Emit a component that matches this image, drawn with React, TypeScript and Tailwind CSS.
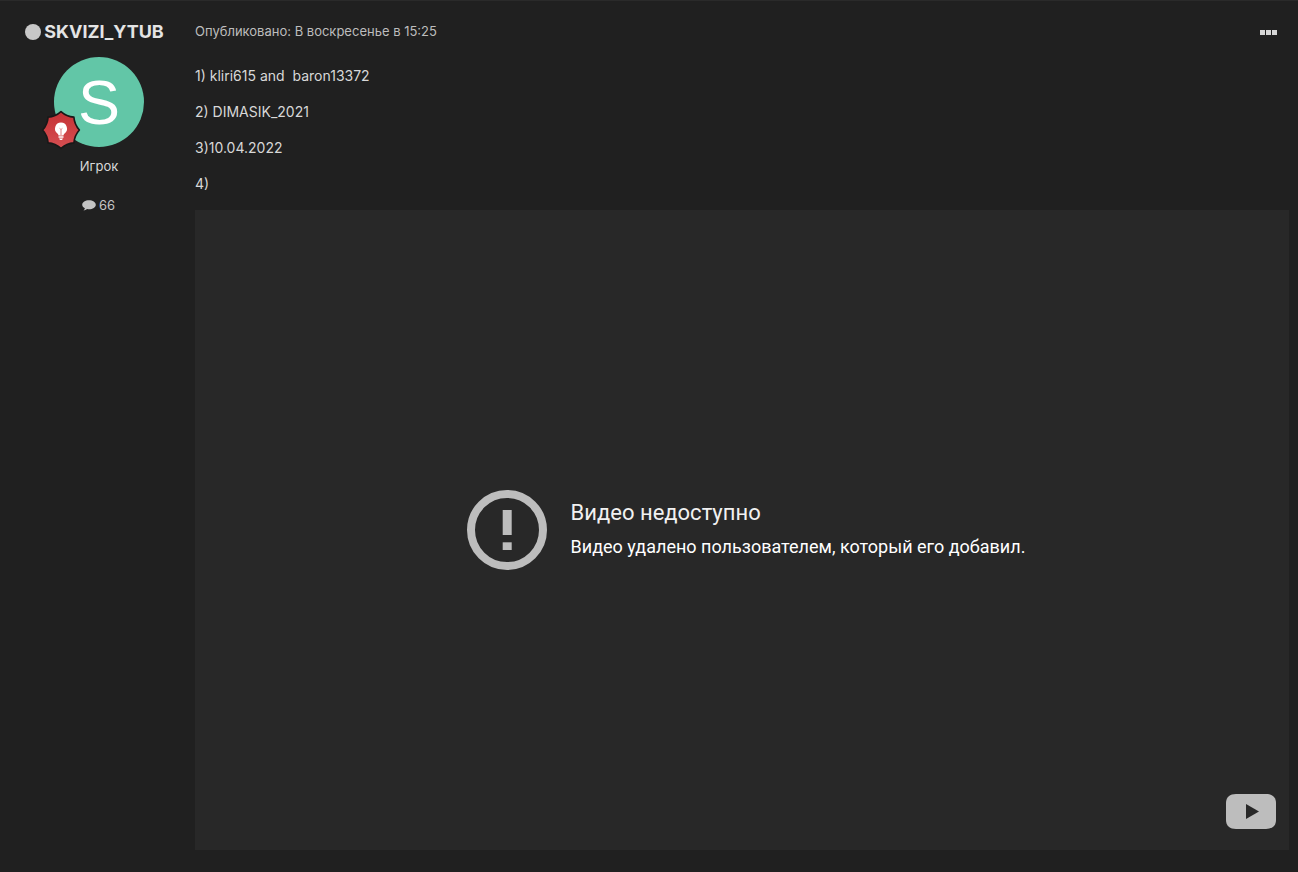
export default function App() {
  return (
    <div className="flex h-[872px] overflow-hidden border-t border-[#2a2a2a] bg-[#202020] font-['Inter',sans-serif] text-[14px] text-[#d4d4d4]">
      <aside className="flex w-[195px] shrink-0 flex-col items-center pt-[19px]">
        <div className="ml-[-6px] flex h-[24px] items-center gap-[3px]">
          <span className="h-[16px] w-[16px] rounded-full bg-[#c8c8c8]" />
          <span className="text-[18px] font-bold leading-[24px] text-[#e4e4e4]">SKVIZI_YTUB</span>
        </div>
        <div className="relative ml-[3px] mt-[13px] h-[90px] w-[90px]">
          <div className="flex h-[90px] w-[90px] items-center justify-center rounded-full bg-[#62c6a7] font-['Liberation_Sans',sans-serif] text-[63px] leading-none text-white">
            S
          </div>
          <svg className="absolute left-[-13.5px] top-[53px]" width="40" height="40" viewBox="0 0 40 40">
            <defs>
              <linearGradient id="badge" x1="0" y1="0" x2="0" y2="1">
                <stop offset="0" stopColor="#c43235" />
                <stop offset="1" stopColor="#d64f52" />
              </linearGradient>
            </defs>
            <path
              d="M20 1.6Q25.55 6.6 32.9 7.1Q33.4 14.45 38.4 20Q33.4 25.55 32.9 32.9Q25.55 33.4 20 38.4Q14.45 33.4 7.1 32.9Q6.6 25.55 1.6 20Q6.6 14.45 7.1 7.1Q14.45 6.6 20 1.6z"
              fill="url(#badge)"
              stroke="#181818"
              strokeWidth="1.6"
              strokeLinejoin="round"
            />
            <path
              d="M20 12.6a6 6 0 0 0-3.6 10.8c.8.6 1 1.2 1.1 2h5c.1-.8.3-1.4 1.1-2A6 6 0 0 0 20 12.6z"
              fill="#fff"
            />
            <path d="M17.5 26.2h5v1.5h-5zM18 28.4h4l-1 1.6h-2z" fill="#fff" />
            <path d="M20 25v-5M18.6 18.4l1.4 1.2 1.4-1.2" fill="none" stroke="#cf4446" strokeWidth=".7" />
          </svg>
        </div>
        <div className="ml-[3px] mt-[10px] text-[13px] leading-[18px] text-[#d8d8d8]">Игрок</div>
        <div className="ml-[2px] mt-[21px] flex items-center gap-[3px] text-[13px] leading-[18px] text-[#c4c4c4]">
          <svg width="14" height="13" viewBox="0 0 14 12">
            <path
              d="M7 .8C3.3.8.2 2.8.2 5.2c0 1.4 1 2.7 2.7 3.5-.2.9-.7 1.7-1.4 2.3 1.3-.1 2.6-.7 3.6-1.5.6.1 1.2.2 1.9.2 3.7 0 6.8-2 6.8-4.5S10.7.8 7 .8z"
              fill="#c4c4c4"
            />
          </svg>
          <span>66</span>
        </div>
      </aside>

      <main className="flex min-w-0 flex-1 flex-col pb-[22px] pr-[9px] pt-[22px]">
        <div className="flex h-[18px] items-center justify-between pr-[12px]">
          <span className="text-[13px] text-[#bdbdbd]">Опубликовано: В воскресенье в 15:25</span>
          <span className="flex gap-[1px]">
            <i className="h-[5px] w-[5px] bg-[#d6d6d6]" />
            <i className="h-[5px] w-[5px] bg-[#d6d6d6]" />
            <i className="h-[5px] w-[5px] bg-[#d6d6d6]" />
          </span>
        </div>
        <div className="mt-[26px] flex flex-col gap-[18px] leading-[18px] text-[#d8d8d8]">
          <p className="whitespace-pre">1) kliri615 and  baron13372</p>
          <p>2) DIMASIK_2021</p>
          <p>3)10.04.2022</p>
          <p>4)</p>
        </div>
        <div className="relative mt-[17px] flex min-h-0 flex-1 items-center justify-center bg-[#282828] font-['Roboto',sans-serif]">
          <div className="ml-[8px] flex items-center gap-[24px]">
            <svg width="80" height="80" viewBox="0 0 80 80">
              <circle cx="40" cy="40" r="36" fill="none" stroke="#bdbdbd" strokeWidth="8" />
              <rect x="35.7" y="20" width="9" height="25" fill="#bdbdbd" />
              <rect x="35.7" y="52.3" width="9" height="7.7" fill="#bdbdbd" />
            </svg>
            <div className="flex flex-col pb-[3px] text-white">
              <div className="text-[22px] leading-[26px] text-[#f1f1f1]">Видео недоступно</div>
              <div className="mt-[11px] text-[18px] leading-[20px]">
                Видео удалено пользователем, который его добавил.
              </div>
            </div>
          </div>
          <svg className="absolute bottom-[21px] right-[13px]" width="50" height="35" viewBox="0 0 50 35">
            <path
              d="M10 0h30c6 0 10 3 10 9v17c0 6-4 9-10 9H10c-6 0-10-3-10-9V9c0-6 4-9 10-9z"
              fill="#bdbdbd"
            />
            <path d="M20 10l13 7.5-13 7.5z" fill="#282828" />
          </svg>
        </div>
      </main>
    </div>
  );
}
